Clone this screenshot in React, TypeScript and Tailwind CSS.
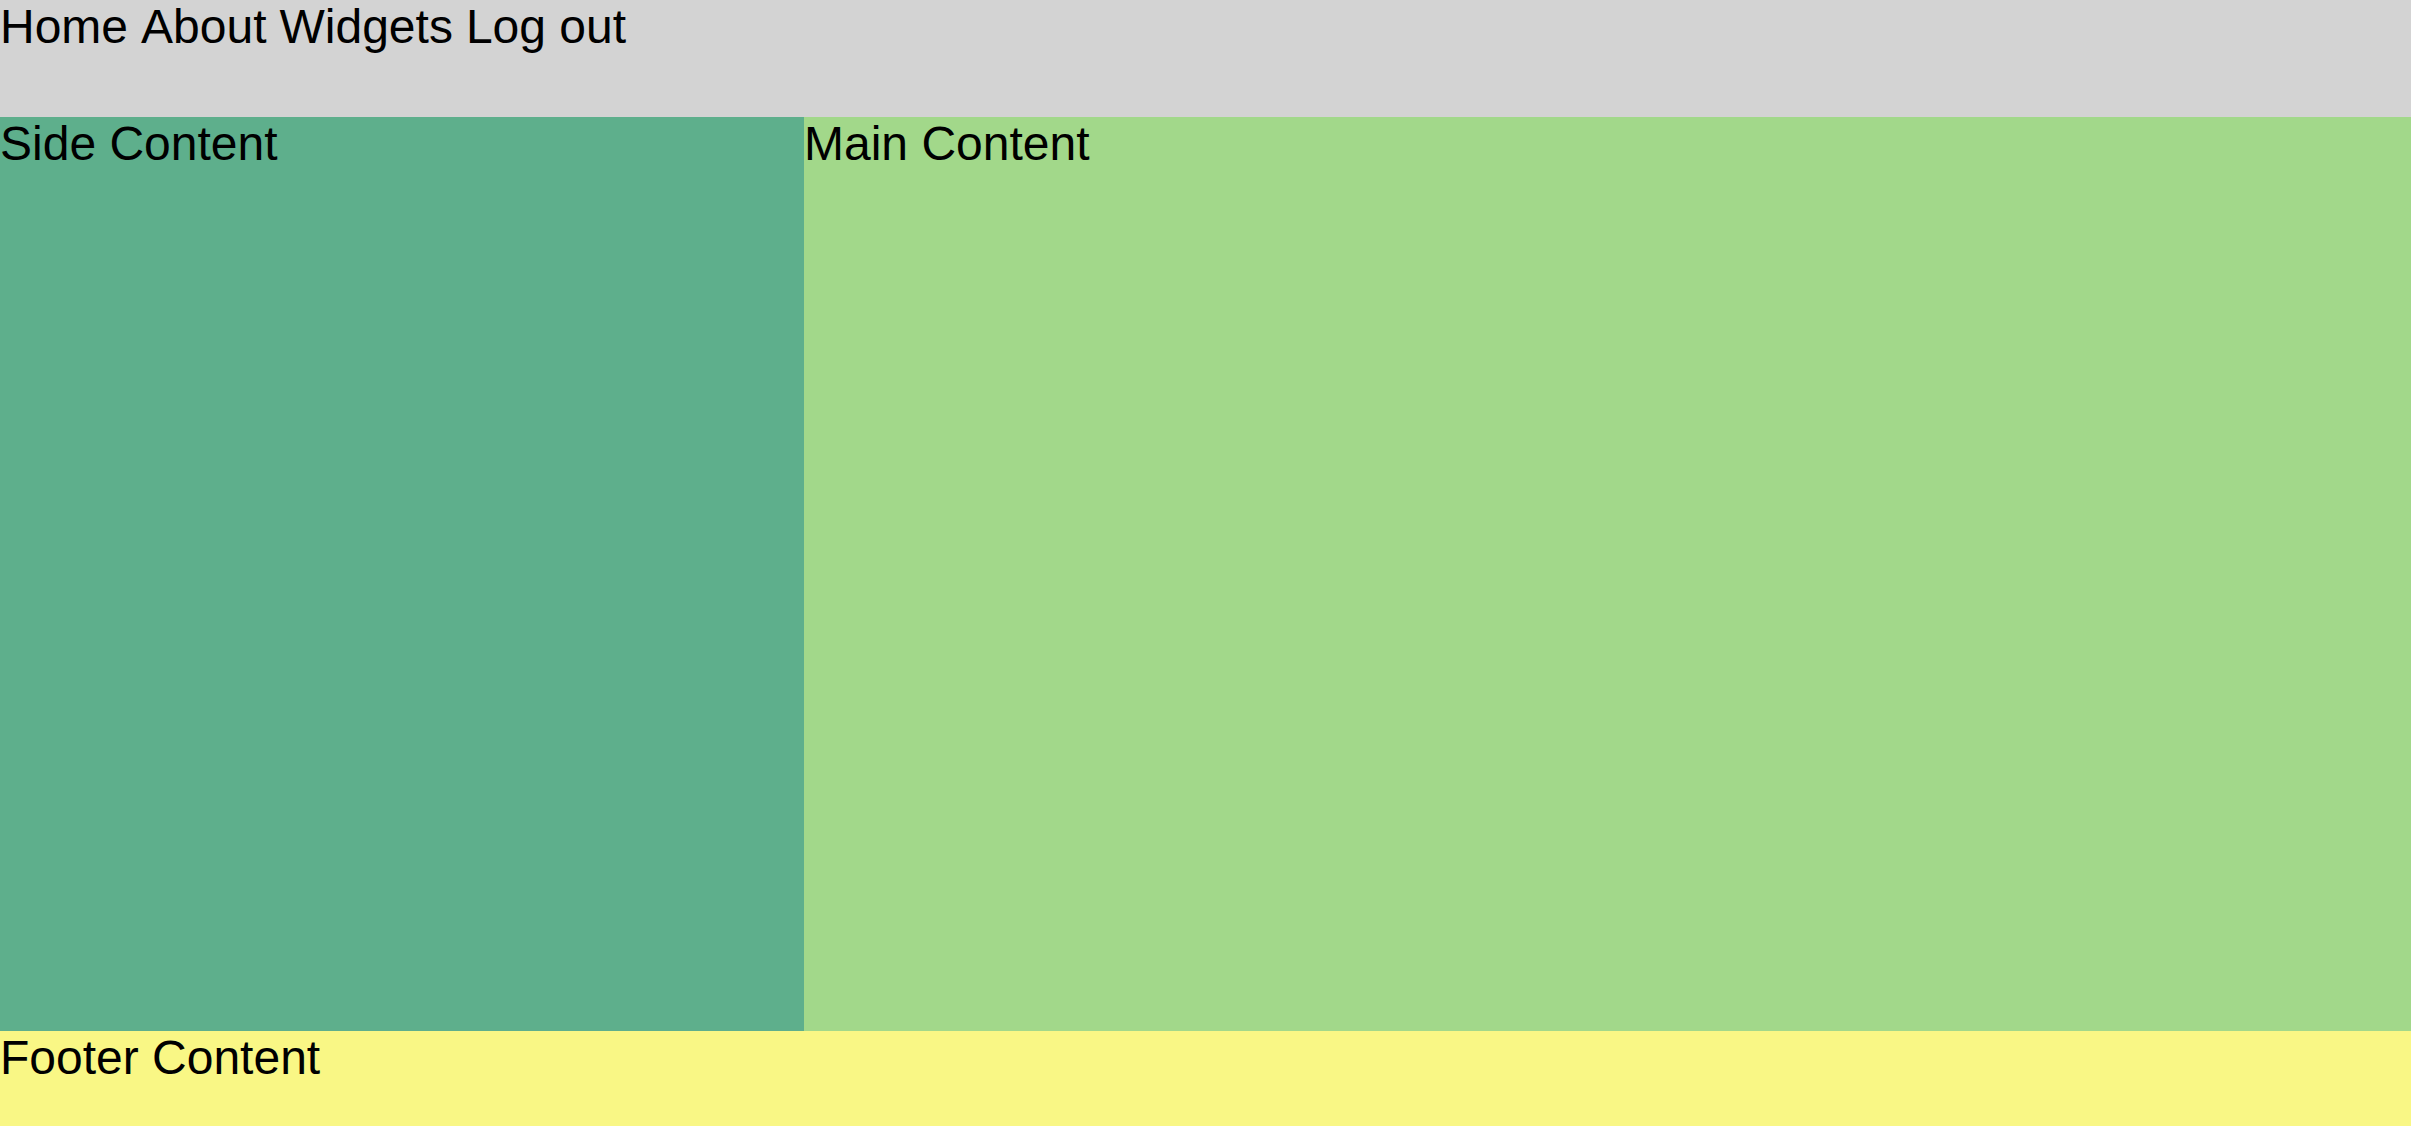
export default function App() {
  return (
    <div className="grid h-[1126px] w-full grid-rows-[117px_914px_95px] font-['Liberation_Sans',Arial,sans-serif] text-[48px] leading-[54px] text-black">
      {/* Nav */}
      <header className="bg-[#d3d3d3]">
        <nav className="flex gap-[13px]">
          <span>Home</span>
          <span>About</span>
          <span>Widgets</span>
          <span>Log out</span>
        </nav>
      </header>

      {/* Body */}
      <div className="grid grid-cols-[804px_1fr]">
        <aside className="bg-[#5eaf8c]">Side Content</aside>
        <main className="bg-[#a2d88a]">Main Content</main>
      </div>

      <footer className="bg-[#f9f785]">Footer Content</footer>
    </div>
  );
}
